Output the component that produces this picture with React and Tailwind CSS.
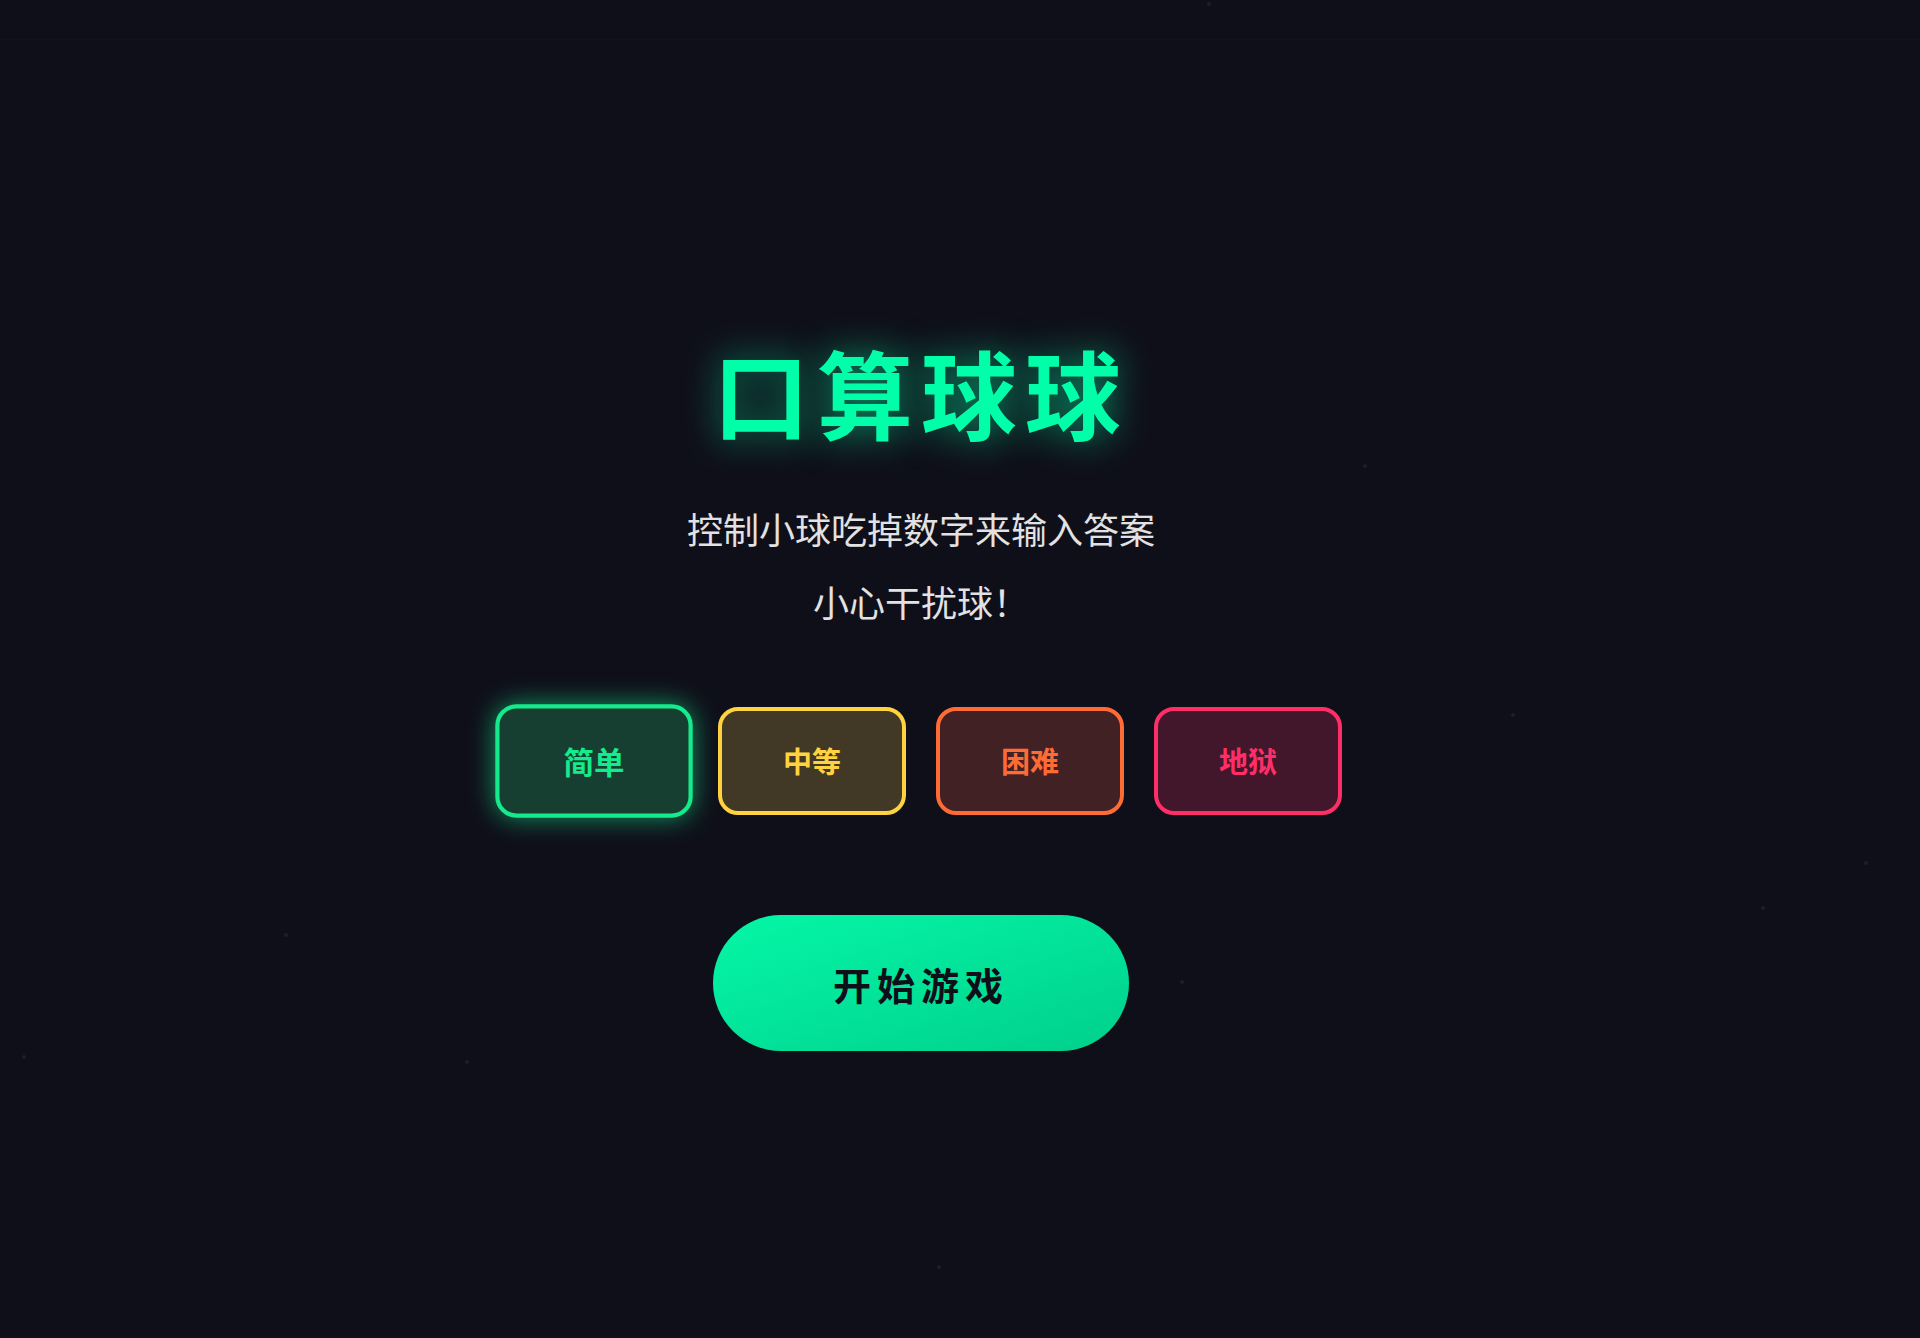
import { useState } from 'react';

const levels = [
    { id: 'easy', label: '简单', cls: 'border-[#14eb8c] text-[#14eb8c] bg-[#173f31]', active: 'scale-105 shadow-[0_0_24px_rgba(20,235,140,0.6)]' },
    { id: 'normal', label: '中等', cls: 'border-[#ffd23f] text-[#ffd23f] bg-[#423826]', active: 'scale-105 shadow-[0_0_24px_rgba(255,210,63,0.6)]' },
    { id: 'hard', label: '困难', cls: 'border-[#ff6b35] text-[#ff6b35] bg-[#412124]', active: 'scale-105 shadow-[0_0_24px_rgba(255,107,53,0.6)]' },
    { id: 'hell', label: '地狱', cls: 'border-[#ff2e68] text-[#ff2e68] bg-[#42172b]', active: 'scale-105 shadow-[0_0_24px_rgba(255,46,104,0.6)]' },
];

// faint floating particles on the backdrop
const dots = [
    [1363, 464], [1511, 713], [1864, 861], [1761, 906], [974, 774],
    [22, 1055], [284, 933], [937, 1265], [1180, 980], [465, 1060], [1207, 2],
];

export default function App() {
    const [level, setLevel] = useState('easy');

    return (
        <div className="relative h-[1338px] w-full overflow-hidden bg-[#0f0f1a] font-['Noto_Sans_CJK_SC','Noto_Sans',sans-serif]">
            {dots.map(([x, y], i) => (
                <span
                    key={i}
                    className="absolute h-[4px] w-[4px] rounded-full bg-[#23233a] opacity-70"
                    style={{ left: x, top: y }}
                />
            ))}

            <div className="h-10 border-b border-[#12121e]" />

            <div className="relative flex flex-col items-center pr-[78px] pt-[303px]">
                <h1 className="text-[96px] font-bold leading-none tracking-[8px] text-[#00ffa8] [text-shadow:0_0_36px_rgba(0,255,168,0.55)]">
                    口算球球
                </h1>

                <p className="mt-[53px] text-center text-[36px] leading-[73px] text-[#e2e2e2]">
                    控制小球吃掉数字来输入答案
                    <br />
                    小心干扰球！
                </p>

                <div className="mt-[69px] flex gap-[30px]">
                    {levels.map(l => (
                        <button
                            key={l.id}
                            onClick={() => setLevel(l.id)}
                            className={`flex h-[108px] w-[188px] items-center justify-center rounded-[20px] border-[4px] text-[29px] font-bold transition-all ${l.cls} ${level === l.id ? l.active : ''}`}
                        >
                            {l.label}
                        </button>
                    ))}
                </div>

                <button className="mt-[100px] flex h-[136px] w-[416px] items-center justify-center rounded-full bg-gradient-to-br from-[#05f7a6] to-[#00d08c] text-[38px] font-bold tracking-[6px] text-[#0f0f1a]">
                    开始游戏
                </button>
            </div>
        </div>
    );
}
